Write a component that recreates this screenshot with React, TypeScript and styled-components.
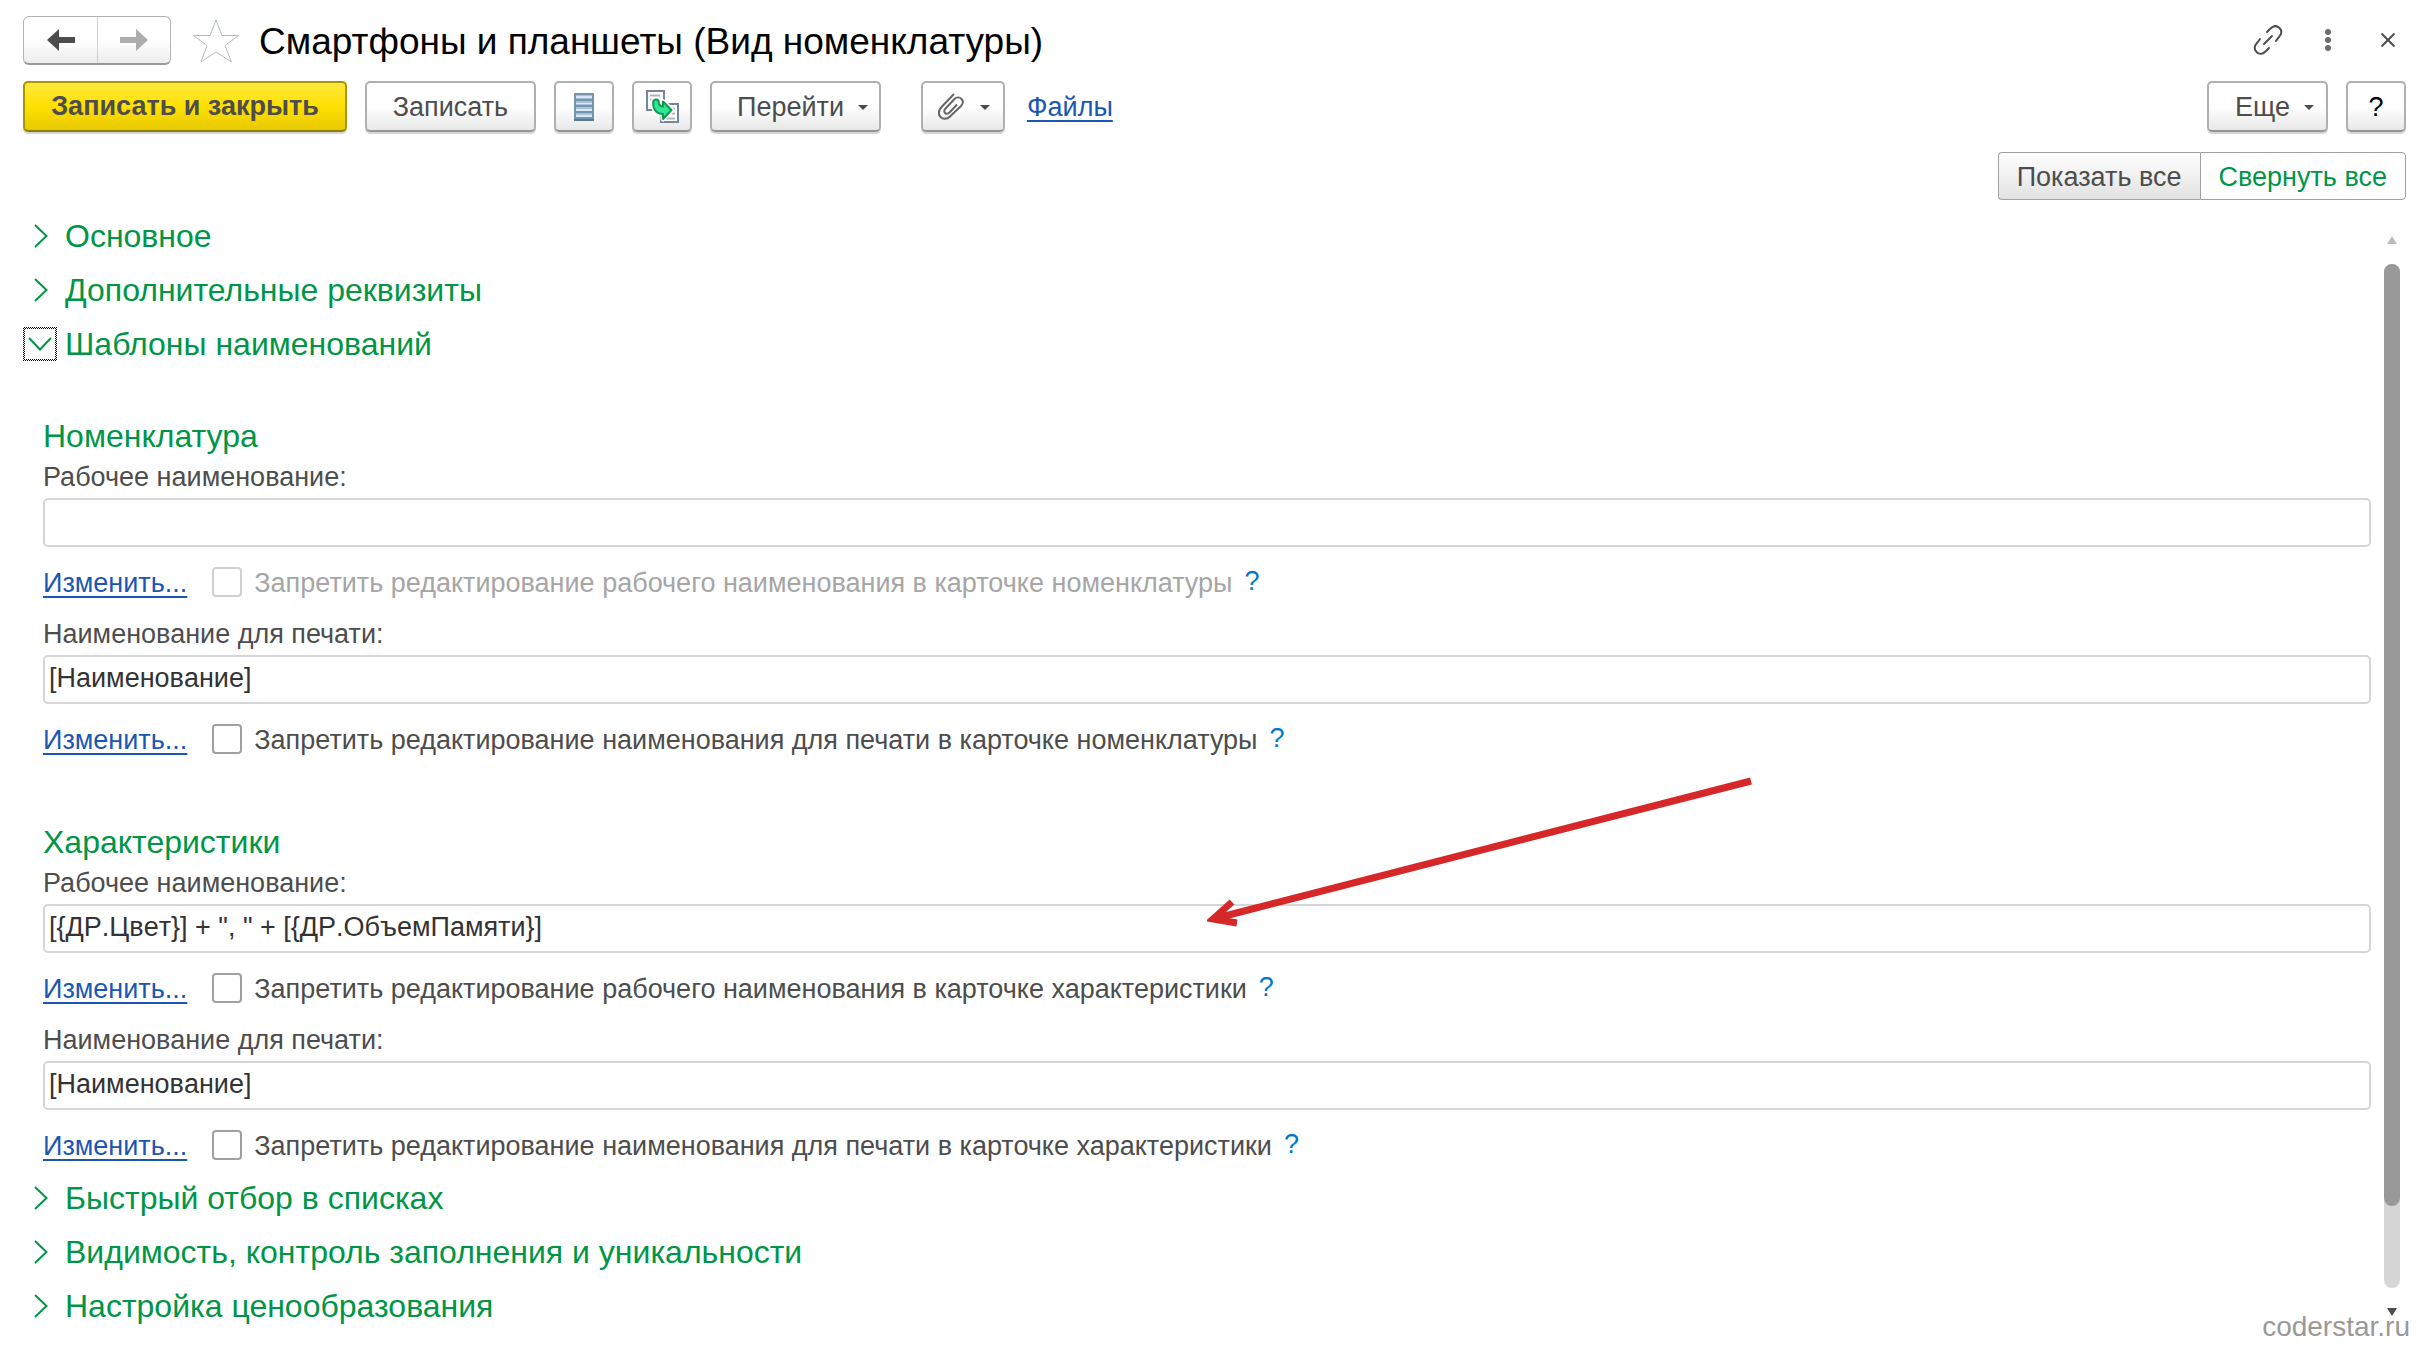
import React, { useId } from 'react';
import styled, { createGlobalStyle, css } from 'styled-components';

const GlobalStyle = createGlobalStyle`
  * { box-sizing: border-box; }
  body { margin: 0; background: #fff; }
  body, button, input {
    font-family: "Liberation Sans", Arial, sans-serif;
    font-size: 27px;
  }
`;

const green = '#009646';
const gray = '#4d4d4d';

const Page = styled.div`
  position: relative;
  display: flex;
  flex-direction: column;
  min-height: 100vh;
  padding-top: 16px;
  color: ${gray};
`;

const TitleBar = styled.header`
  display: flex;
  align-items: center;
  height: 49px;
  padding: 0 28px 0 23px;
`;

const NavGroup = styled.div`
  display: flex;
  height: 49px;
  border: 1px solid #b3b3b3;
  border-bottom: 2px solid #9a9a9a;
  border-radius: 6px;
  background: linear-gradient(#fff 50%, #ededed);
`;

const NavButton = styled.button`
  display: grid;
  place-items: center;
  width: 73px;
  padding: 0;
  border: 0;
  background: none;
  & + & { border-left: 1px solid #d0d0d0; }
`;

const StarButton = styled.button`
  display: grid;
  margin-left: 22px;
  padding: 0;
  border: 0;
  background: none;
`;

const Title = styled.h1`
  flex: 1;
  margin: 0 0 0 20px;
  padding-top: 2px;
  color: #000;
  font-size: 37px;
  font-weight: 400;
  line-height: 47px;
  white-space: nowrap;
`;

const WindowButtons = styled.div`
  display: flex;
  align-items: center;
`;

const PlainButton = styled.button`
  display: grid;
  place-items: center;
  width: 60px;
  height: 49px;
  padding: 0 0 2px;
  border: 0;
  background: none;
  &:last-child { margin-right: -12px; }
`;

const Toolbar = styled.div`
  display: flex;
  align-items: center;
  gap: 18px;
  margin-top: 16px;
  padding: 0 28px 0 23px;
`;

const Button = styled.button<{ $width: number; $primary?: boolean }>`
  display: flex;
  align-items: center;
  justify-content: center;
  gap: 14px;
  width: ${p => p.$width}px;
  height: 51px;
  padding: 0;
  border: 2px solid #b0b0b0;
  border-bottom-color: #959595;
  border-radius: 5px;
  background: linear-gradient(#fff 50%, #e8e8e8);
  box-shadow: 0 2px 0 #d4d4d4;
  color: ${gray};
  white-space: nowrap;
  ${p => p.$primary && css`
    border-color: #ab9600;
    border-bottom-color: #8f7d00;
    background: linear-gradient(#ffe93f, #ffe000 50%, #e8c900);
    font-weight: 700;
  `}
`;

const HelpButton = styled(Button)`
  padding-top: 2px;
  color: #000;
`;

const ButtonText = styled.span<{ $menu?: boolean }>`
  padding: 2px 0 0 ${p => (p.$menu ? 14 : 0)}px;
`;

const Spacer = styled.div` flex: 1; `;

const AttachGroup = styled.div`
  display: flex;
  align-items: center;
  gap: 22px;
  margin-left: 22px;
`;

const AttachButton = styled(Button)`
  gap: 16px;
  padding-left: 2px;
`;

const Link = styled.a`
  padding-top: 2px;
  color: #1a56b4;
  text-decoration: underline;
  text-decoration-thickness: 2px;
  text-underline-offset: 4px;
  text-decoration-skip-ink: none;
  white-space: nowrap;
`;

const ViewBar = styled.div`
  display: flex;
  justify-content: flex-end;
  margin-top: 20px;
  padding-right: 28px;
`;

const Toggle = styled.button<{ $active?: boolean }>`
  height: 48px;
  padding: 2px 18px 0;
  border: 1px solid #a0a0a0;
  border-radius: 0 4px 4px 0;
  background: #fff;
  color: ${green};
  ${p => p.$active && css`
    border-right: 0;
    border-radius: 4px 0 0 4px;
    background: linear-gradient(#fff, #e2e2e2);
    color: ${gray};
  `}
`;

const Body = styled.div`
  flex: 1;
  display: flex;
  gap: 13px;
  padding: 9px 34px 0 23px;
`;

const Content = styled.main`
  flex: 1;
  min-width: 0;
  padding-bottom: 16px;
`;

const SectionHeading = styled.h2`
  margin: 0;
  font-size: 32px;
  font-weight: 400;
`;

const SectionButton = styled.button`
  display: flex;
  align-items: center;
  gap: 8px;
  height: 54px;
  padding: 0;
  border: 0;
  background: none;
  color: ${green};
  font-size: 32px;
  white-space: nowrap;
`;

const Marker = styled.span<{ $focused?: boolean }>`
  display: grid;
  place-items: center;
  width: 34px;
  height: 34px;
  border: 2px solid transparent;
  ${p => p.$focused && css`
    background:
      linear-gradient(#fff, #fff) padding-box,
      repeating-conic-gradient(#000 0 25%, #fff 0 50%) 0 0 / 2px 2px border-box;
  `}
`;

const Groups = styled.div`
  display: grid;
  gap: 60px;
  padding: 45px 0 3px 20px;
`;

const GroupTitle = styled.h3`
  margin: 0;
  color: ${green};
  font-size: 32px;
  font-weight: 400;
  line-height: 40px;
`;

const Blocks = styled.div`
  display: grid;
  gap: 8px;
`;

const FieldLabel = styled.label`
  display: block;
  line-height: 42px;
`;

const FieldBox = styled.div`
  position: relative;
  display: flex;
`;

const TextInput = styled.input`
  flex: 1;
  min-width: 0;
  height: 49px;
  padding: 0 4px 2px;
  border: 2px solid #d6d6d6;
  border-radius: 5px;
  outline: 0;
  background: #fff;
  color: #333;
  font-kerning: none;
`;

const OptionRow = styled.div`
  display: flex;
  align-items: center;
  height: 46px;
  margin-top: 12px;
`;

const CheckLabel = styled.label<{ $disabled?: boolean }>`
  display: flex;
  align-items: center;
  gap: 12px;
  margin-left: 25px;
  color: ${p => (p.$disabled ? '#a6a6a6' : gray)};
  white-space: nowrap;
`;

const CheckText = styled.span` padding-top: 2px; `;

const CheckBox = styled.input`
  appearance: none;
  width: 30px;
  height: 30px;
  margin: 0;
  border: 2px solid #a0a0a0;
  border-radius: 4px;
  background: #fff;
  &:disabled { border-color: #d0d0d0; }
`;

const Hint = styled.button`
  margin-left: 12px;
  padding: 0 0 2px;
  border: 0;
  background: none;
  color: #0077c8;
`;

const ArrowOverlay = styled.svg`
  position: absolute;
  left: 50%;
  bottom: 26px;
  pointer-events: none;
`;

const ScrollBar = styled.div`
  display: flex;
  flex-direction: column;
  align-items: center;
  gap: 20px;
  width: 16px;
  padding: 27px 0 35px;
`;

const ScrollArrow = styled.span<{ $down?: boolean }>`
  border: 5px solid transparent;
  border-width: ${p => (p.$down ? '8px 5px 0' : '0 5px 8px')};
  border-top-color: ${p => (p.$down ? '#4d4d4d' : 'transparent')};
  border-bottom-color: ${p => (p.$down ? 'transparent' : '#bdbdbd')};
`;

const ScrollTrack = styled.div`
  flex: 1;
  width: 16px;
  border-radius: 8px;
  background: #d6d6d6;
`;

const ScrollThumb = styled.div`
  height: 92%;
  border-radius: 8px;
  background: #999;
`;

const Watermark = styled.div`
  position: absolute;
  right: 24px;
  bottom: 8px;
  color: #999;
  font-size: 28px;
  line-height: 32px;
`;

const Caret = () => (
  <svg width="10" height="7" viewBox="0 0 10 7" aria-hidden="true">
    <path d="M0 2h10L5 7z" fill={gray} />
  </svg>
);

const NavArrow = ({ forward }: { forward?: boolean }) => (
  <svg width="28" height="22" viewBox="0 0 28 22" aria-hidden="true">
    <path
      d={forward ? 'M28 11 16 0v8H0v6h16v8z' : 'M0 11 12 0v8h16v6H12v8z'}
      fill={forward ? '#adadad' : gray}
    />
  </svg>
);

const Star = () => (
  <svg width="46" height="44" viewBox="0 0 46 44" aria-hidden="true">
    <path
      d="M23 1l6 15.500h16.500L32 26.500l6.500 16.500L23 33 8 43l6-16.500L.5 16.500H17z"
      fill="none" stroke="#b4bcc4" strokeWidth="1"
    />
  </svg>
);

const ListIcon = () => (
  <svg width="20" height="28" viewBox="0 0 20 28" aria-hidden="true">
    <rect width="20" height="28" rx="1" fill="#7394ad" />
    <path d="M2 2h16v4H2zM2 8h16v4H2zM2 14h16v4H2zM2 20h16v4H2z" fill="#a9c3d6" />
    <path d="M2 3h16v2H2zM2 10h16v1H2zM2 16h16v2H2zM2 22h16v2H2z" fill="#d9e8f4" />
    <path d="M0 26h20v2H0z" fill="#557a94" />
  </svg>
);

const sheetArrow = 'M7.500 10.500c2-1.500 4-1 5 0 0 4 1 6 4.500 6v-5L25.500 20 17 29v-5C10 24 6 18 7.500 10.500z';

const CopyIcon = () => (
  <svg width="33" height="33" viewBox="0 0 33 33" aria-hidden="true">
    <path d="M1 1h17v19H1z" fill="#fff" stroke="#76869a" strokeWidth="2" />
    <path d="M4 5.500h10M4 9.500h4" stroke="#a9b5c1" strokeWidth="2" />
    <path d="M15 14h17v18H15z" fill="#fff" stroke="#76869a" strokeWidth="2" />
    <path d="M25 18.500h4M26 23.500h3M19 28.500h10" stroke="#a9b5c1" strokeWidth="2" />
    <path d={sheetArrow} fill="#fff" stroke="#fff" strokeWidth="5" strokeLinejoin="round" />
    <path d={sheetArrow} fill="#2fe596" stroke="#0f9a4a" strokeWidth="2" strokeLinejoin="round" />
  </svg>
);

const ClipIcon = () => (
  <svg width="26" height="28" viewBox="0 0 26 28" aria-hidden="true">
    <path
      d="M16 1 4 13.500c-4 4-3.500 8-1.500 10.500 2.500 2.500 6.500 2.500 9.500-.5L23 13c2.500-2.500 2.500-5 .5-7-2-2-5-2-7 0L7.500 15.500c-1.500 1.500-1.500 3.500-.5 4.500s3 1 4.500-.5l7.500-8"
      fill="none" stroke="#666" strokeWidth="2"
    />
  </svg>
);

const ChainIcon = () => (
  <svg width="30" height="30" viewBox="0 0 30 30" aria-hidden="true">
    <g fill="none" stroke={gray} strokeWidth="2" strokeLinecap="round">
      <path d="M14 7l3.500-3.500c3-3 6.500-3 9-.5s2.500 6-.5 9L23 16" />
      <path d="M16 23l-3.500 3.500c-3 3-6.500 3-9 .5s-2.500-6 .5-9L7 14" />
      <path d="M11 19l8-8" />
    </g>
  </svg>
);

const DotsIcon = () => (
  <svg width="6" height="22" viewBox="0 0 6 22" aria-hidden="true">
    <g fill="#6b6b6b">
      <circle cx="3" cy="3" r="3" />
      <circle cx="3" cy="11" r="3" />
      <circle cx="3" cy="19" r="3" />
    </g>
  </svg>
);

const CloseIcon = () => (
  <svg width="14" height="14" viewBox="0 0 14 14" aria-hidden="true">
    <path d="M.5.5l13 13M13.500.5l-13 13" stroke={gray} strokeWidth="2" />
  </svg>
);

const Chevron = ({ open }: { open?: boolean }) => (
  <svg
    width={open ? 24 : 16} height={open ? 14 : 24}
    viewBox={open ? '0 0 24 14' : '0 0 16 24'} aria-hidden="true"
  >
    <path
      d={open ? 'M1 1l11 11.500L23 1' : 'M3 1l11.500 11L3 23'}
      fill="none" stroke={green} strokeWidth="2"
    />
  </svg>
);

const Section = ({ title, open }: { title: string; open?: boolean }) => (
  <SectionHeading>
    <SectionButton type="button" aria-expanded={!!open}>
      <Marker $focused={open}><Chevron open={open} /></Marker>
      {title}
    </SectionButton>
  </SectionHeading>
);

interface FieldProps {
  label: string;
  value: string;
  option: string;
  disabled?: boolean;
  arrow?: boolean;
}

const Field = ({ label, value, option, disabled, arrow }: FieldProps) => {
  const id = useId();
  return (
    <div>
      <FieldLabel htmlFor={id}>{label}</FieldLabel>
      <FieldBox>
        <TextInput id={id} type="text" defaultValue={value} />
        {arrow && (
          <ArrowOverlay width="550" height="152" viewBox="0 0 550 152" aria-hidden="true">
            <path d="M544 6 6 144M25 127 6 144l24 4" fill="none" stroke="#d62828" strokeWidth="7" />
          </ArrowOverlay>
        )}
      </FieldBox>
      <OptionRow>
        <Link href="#">Изменить...</Link>
        <CheckLabel $disabled={disabled}>
          <CheckBox type="checkbox" disabled={disabled} />
          <CheckText>{option}</CheckText>
        </CheckLabel>
        <Hint type="button">?</Hint>
      </OptionRow>
    </div>
  );
};

export default function App() {
  return (
    <Page>
      <GlobalStyle />
      <TitleBar>
        <NavGroup>
          <NavButton type="button" aria-label="Назад"><NavArrow /></NavButton>
          <NavButton type="button" aria-label="Вперед"><NavArrow forward /></NavButton>
        </NavGroup>
        <StarButton type="button" aria-label="Избранное"><Star /></StarButton>
        <Title>Смартфоны и планшеты (Вид номенклатуры)</Title>
        <WindowButtons>
          <PlainButton type="button" aria-label="Ссылка"><ChainIcon /></PlainButton>
          <PlainButton type="button" aria-label="Меню"><DotsIcon /></PlainButton>
          <PlainButton type="button" aria-label="Закрыть"><CloseIcon /></PlainButton>
        </WindowButtons>
      </TitleBar>

      <Toolbar>
        <Button type="button" $width={324} $primary>Записать и закрыть</Button>
        <Button type="button" $width={171}><ButtonText>Записать</ButtonText></Button>
        <Button type="button" $width={60} aria-label="Список"><ListIcon /></Button>
        <Button type="button" $width={60} aria-label="Скопировать"><CopyIcon /></Button>
        <Button type="button" $width={171}><ButtonText $menu>Перейти</ButtonText><Caret /></Button>
        <AttachGroup>
          <AttachButton type="button" $width={84} aria-label="Вложения"><ClipIcon /><Caret /></AttachButton>
          <Link href="#">Файлы</Link>
        </AttachGroup>
        <Spacer />
        <Button type="button" $width={121}><ButtonText $menu>Еще</ButtonText><Caret /></Button>
        <HelpButton type="button" $width={60}>?</HelpButton>
      </Toolbar>

      <ViewBar>
        <Toggle type="button" $active>Показать все</Toggle>
        <Toggle type="button">Свернуть все</Toggle>
      </ViewBar>

      <Body>
        <Content>
          <Section title="Основное" />
          <Section title="Дополнительные реквизиты" />
          <Section title="Шаблоны наименований" open />
          <Groups>
            <section>
              <GroupTitle>Номенклатура</GroupTitle>
              <Blocks>
                <Field
                  label="Рабочее наименование:" value="" disabled
                  option="Запретить редактирование рабочего наименования в карточке номенклатуры"
                />
                <Field
                  label="Наименование для печати:" value="[Наименование]"
                  option="Запретить редактирование наименования для печати в карточке номенклатуры"
                />
              </Blocks>
            </section>
            <section>
              <GroupTitle>Характеристики</GroupTitle>
              <Blocks>
                <Field
                  label="Рабочее наименование:" value={'[{ДР.Цвет}] + ", " + [{ДР.ОбъемПамяти}]'} arrow
                  option="Запретить редактирование рабочего наименования в карточке характеристики"
                />
                <Field
                  label="Наименование для печати:" value="[Наименование]"
                  option="Запретить редактирование наименования для печати в карточке характеристики"
                />
              </Blocks>
            </section>
          </Groups>
          <Section title="Быстрый отбор в списках" />
          <Section title="Видимость, контроль заполнения и уникальности" />
          <Section title="Настройка ценообразования" />
        </Content>
        <ScrollBar aria-hidden="true">
          <ScrollArrow />
          <ScrollTrack><ScrollThumb /></ScrollTrack>
          <ScrollArrow $down />
        </ScrollBar>
      </Body>
      <Watermark>coderstar.ru</Watermark>
    </Page>
  );
}
